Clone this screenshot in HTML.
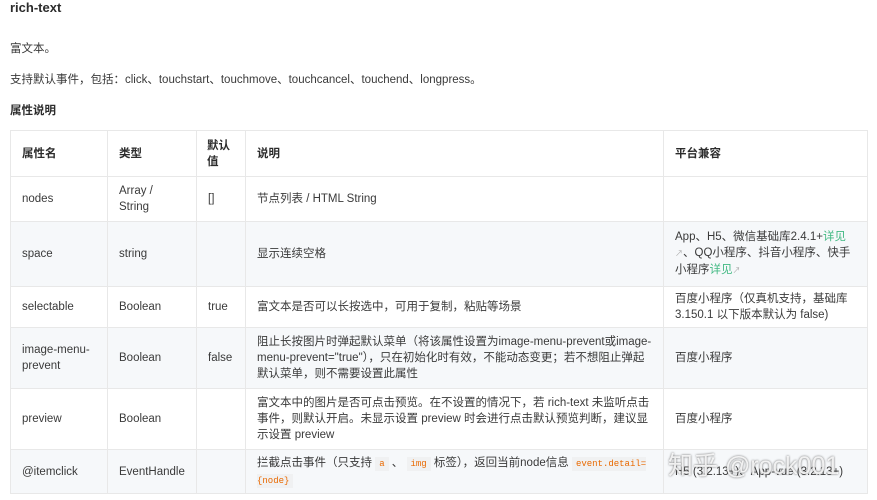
<!DOCTYPE html>
<html><head><meta charset="utf-8"><style>
body{margin:0;width:877px;height:500px;overflow:hidden;background:#fff;font-family:"Liberation Sans","Noto Sans CJK SC",sans-serif;color:#3a3a3a;font-size:11.5px}
.t{position:absolute;left:10px;white-space:nowrap}
table{position:absolute;left:10px;top:130px;border-collapse:collapse;width:857px;table-layout:fixed}
td,th{border:1px solid #e8e8e8;padding:0 11px;text-align:left;line-height:16px;vertical-align:middle}
th{font-weight:bold;height:45px;color:#2c2c2c}
tr:nth-child(odd) td{background:#f6f8fa}
a{color:#42b983;text-decoration:none}
i{font-style:normal;font-size:8px;color:#aaa}
code{background:#f0f1f2;color:#e96900;font-family:"Liberation Mono",monospace;font-size:9px;padding:2px 4px}
.w{position:absolute;left:668px;top:446px;font-size:25px;color:rgba(255,255,255,.85);text-shadow:0 0 2px #666;white-space:nowrap}
</style></head><body>
<div class="t" style="top:0;font-size:13px;font-weight:bold;color:#2c2c2c">rich-text</div>
<div class="t" style="top:40px">富文本。</div>
<div class="t" style="top:71px">支持默认事件，包括：click、touchstart、touchmove、touchcancel、touchend、longpress。</div>
<div class="t" style="top:102px;font-weight:bold;color:#2c2c2c">属性说明</div>
<table>
<colgroup><col style="width:97px"><col style="width:89px"><col style="width:49px"><col style="width:418px"><col style="width:204px"></colgroup>
<tr><th>属性名</th><th>类型</th><th style="padding:0 10px">默认值</th><th>说明</th><th>平台兼容</th></tr>
<tr style="height:45px"><td>nodes</td><td>Array / String</td><td>[]</td><td>节点列表 / HTML String</td><td></td></tr>
<tr style="height:65px"><td>space</td><td>string</td><td></td><td>显示连续空格</td><td>App、H5、微信基础库2.4.1+<a>详见</a><i>↗</i>、QQ小程序、抖音小程序、快手小程序<a>详见</a><i>↗</i></td></tr>
<tr style="height:41px"><td>selectable</td><td>Boolean</td><td>true</td><td>富文本是否可以长按选中，可用于复制，粘贴等场景</td><td>百度小程序（仅真机支持，基础库 3.150.1 以下版本默认为 false)</td></tr>
<tr style="height:61px"><td>image-menu-prevent</td><td>Boolean</td><td>false</td><td>阻止长按图片时弹起默认菜单（将该属性设置为image-menu-prevent或image-menu-prevent="true"），只在初始化时有效，不能动态变更；若不想阻止弹起默认菜单，则不需要设置此属性</td><td>百度小程序</td></tr>
<tr style="height:61px"><td>preview</td><td>Boolean</td><td></td><td>富文本中的图片是否可点击预览。在不设置的情况下，若 rich-text 未监听点击事件，则默认开启。未显示设置 preview 时会进行点击默认预览判断，建议显示设置 preview</td><td>百度小程序</td></tr>
<tr style="height:44px"><td>@itemclick</td><td>EventHandle</td><td></td><td>拦截点击事件（只支持 <code>a</code> 、 <code>img</code> 标签），返回当前node信息 <code>event.detail={node}</code></td><td>H5 (3.2.13+)、App-vue (3.2.13+)</td></tr>
</table>
<div class="w">知乎 @rock001</div>
</body></html>
